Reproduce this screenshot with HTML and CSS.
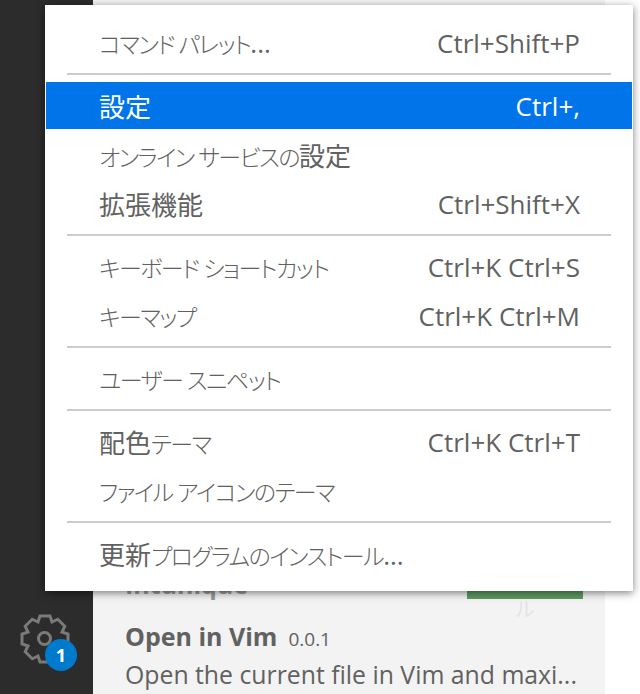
FILE: index.html
```html
<!DOCTYPE html>
<html lang="ja">
<head>
    <meta charset="UTF-8">
    <title>Manage menu</title>
    <link rel="stylesheet" href="styles.css">
</head>
<body>
    <div class="app">
        <div class="activitybar">
            <div class="gear">
                <svg class="gear-icon" width="50" height="50" viewBox="0 0 50 50">
                    <polygon points="20,2 30,2 32,8 37.73,5.2 44.8,12.27 42,18 48,20 48,30 42,32 44.8,37.73 37.73,44.8 32,42 30,48 20,48 18,42 12.27,44.8 5.2,37.73 8,32 2,30 2,20 8,18 5.2,12.27 12.27,5.2 18,8" fill="none" stroke="#7a7a7a" stroke-width="3"/>
                    <circle cx="24.500" cy="24.500" r="6" fill="none" stroke="#7a7a7a" stroke-width="3"/>
                </svg>
                <span class="badge">1</span>
            </div>
        </div>
        <div class="sidebar">
            <div class="ext-partial">
                <span class="ext-author">Intunique</span>
                <span class="ext-install">インストール</span>
            </div>
            <div class="ext-title"><b>Open in Vim</b><span class="ext-version">0.0.1</span></div>
            <div class="ext-desc">Open the current file in Vim and maxi...</div>
        </div>
    </div>

    <div class="menu">
        <div class="item"><span class="label"><span class="kana">コマンド パレット</span>...</span><span>Ctrl+Shift+P</span></div>
        <div class="sep"></div>
        <div class="item active"><span class="label">設定</span><span>Ctrl+,</span></div>
        <div class="item"><span class="label"><span class="kana">オンライン サービスの</span>設定</span></div>
        <div class="item"><span class="label">拡張機能</span><span>Ctrl+Shift+X</span></div>
        <div class="sep"></div>
        <div class="item"><span class="label"><span class="kana">キーボード ショートカット</span></span><span>Ctrl+K Ctrl+S</span></div>
        <div class="item"><span class="label"><span class="kana">キーマップ</span></span><span>Ctrl+K Ctrl+M</span></div>
        <div class="sep"></div>
        <div class="item"><span class="label"><span class="kana">ユーザー スニペット</span></span></div>
        <div class="sep"></div>
        <div class="item"><span class="label">配色<span class="kana">テーマ</span></span><span>Ctrl+K Ctrl+T</span></div>
        <div class="item"><span class="label"><span class="kana">ファイル アイコンのテーマ</span></span></div>
        <div class="sep"></div>
        <div class="item"><span class="label">更新<span class="kana">プログラムのインストール</span>...</span></div>
    </div>
</body>
</html>
```

FILE: styles.css
```css
html, body {
    margin: 0;
    height: 100%;
    overflow: hidden;
    background: #fff;
}
body {
    font-family: "Open Sans", "Noto Sans CJK JP", sans-serif;
    color: #616161;
}
.app {
    display: flex;
    height: 694px;
}
.activitybar {
    width: 93px;
    background-color: #2c2c2c;
    display: flex;
    flex-direction: column;
    justify-content: flex-end;
    align-items: center;
    box-sizing: border-box;
    padding-bottom: 30px;
}
.gear {
    position: relative;
    width: 50px;
    height: 50px;
    margin-right: 3px;
}
.gear-icon {
    display: block;
}
.badge {
    position: absolute;
    left: 25px;
    top: 25px;
    width: 32px;
    height: 32px;
    border-radius: 50%;
    background-color: #007acc;
    color: #fff;
    font-size: 18px;
    font-weight: 700;
    line-height: 32px;
    text-align: center;
}
.sidebar {
    width: 512px;
    background-color: #f3f3f3;
    box-sizing: border-box;
    padding: 0 22px 4px 32px;
    display: flex;
    flex-direction: column;
    justify-content: flex-end;
}
.ext-partial {
    display: flex;
    justify-content: space-between;
    align-items: flex-end;
    margin-bottom: 21px;
}
.ext-author {
    font-size: 25px;
    font-weight: 700;
    color: #9a9a9a;
    line-height: 30px;
}
.ext-install {
    background-color: #5c9a60;
    color: #e4e4e4;
    font-size: 20px;
    width: 116px;
    height: 34px;
    line-height: 30px;
    text-align: center;
}
.ext-title {
    font-size: 25px;
    line-height: 32px;
    margin-bottom: 3px;
}
.ext-version {
    font-size: 19px;
    margin-left: 11px;
}
.ext-desc {
    font-size: 24.800px;
    line-height: 32px;
    white-space: nowrap;
}
.menu {
    position: absolute;
    left: 45px;
    top: 5px;
    width: 588px;
    height: 586px;
    box-sizing: border-box;
    padding: 13px 1px;
    display: flex;
    flex-direction: column;
    background-color: #fff;
    box-shadow: 0 2px 8px rgba(0, 0, 0, 0.5);
    font-size: 26px;
}
.item {
    height: 47px;
    flex: none;
    margin: 1px 0;
    display: flex;
    justify-content: space-between;
    align-items: center;
    padding: 0 52px 0 53px;
    white-space: nowrap;
}
.item.active {
    background-color: #0074e8;
    color: #fff;
}
.label {
    font-feature-settings: "palt";
}
.kana {
    font-size: 23px;
    letter-spacing: -1.500px;
    font-weight: 300;
}
.sep {
    height: 2px;
    flex: none;
    margin: 6px 21px;
    background-color: #cccccc;
}
```
